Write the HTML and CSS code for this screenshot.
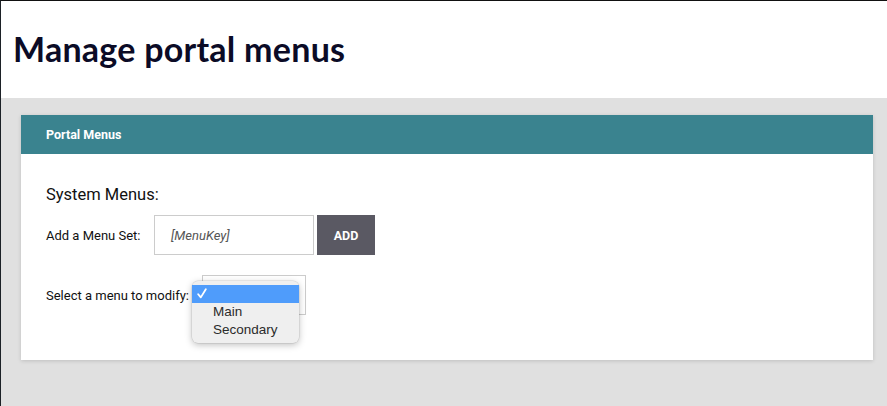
FILE: index.html
```html
<!DOCTYPE html>
<html>
<head>
<meta charset="utf-8">
<link rel="stylesheet" href="styles.css">
</head>
<body>
<div class="page">
  <header class="top">
    <h1 class="title">Manage portal menus</h1>
  </header>
  <main class="main">
    <section class="card">
      <div class="card-head">Portal Menus</div>
      <div class="card-body">
        <h2 class="section-title">System Menus:</h2>
        <div class="row">
          <label class="lbl">Add a Menu Set:</label>
          <div class="input">[MenuKey]</div>
          <button class="btn">ADD</button>
        </div>
        <div class="row row-select">
          <label class="lbl lbl-select">Select a menu to modify:</label>
          <div class="select-wrap">
            <div class="select"></div>
            <div class="popup">
              <div class="opt opt-active"><svg class="check" width="10" height="11" viewBox="0 0 10 11"><path d="M1.2 6.2 L3.8 9.4 L8.8 1.2" fill="none" stroke="#fff" stroke-width="1.8" stroke-linecap="round" stroke-linejoin="round"/></svg></div>
              <div class="opt">Main</div>
              <div class="opt">Secondary</div>
            </div>
          </div>
        </div>
      </div>
    </section>
  </main>
</div>
</body>
</html>
```

FILE: styles.css
```css
html, body {
  margin: 0;
  padding: 0;
  height: 100%;
}
body {
  font-family: Roboto, "Liberation Sans", sans-serif;
  background: #e0e0e0;
}
.page {
  height: 100%;
  box-sizing: border-box;
  border-top: 1px solid #111;
  border-left: 1px solid #1c2126;
  background: #e0e0e0;
}
.top {
  background: #fff;
  height: 97px;
  display: flex;
  align-items: center;
  padding-left: 12px;
}
.title {
  margin: 0;
  font-family: Lato, sans-serif;
  font-weight: 700;
  font-size: 34px;
  color: #0b0b26;
  letter-spacing: 0.25px;
  position: relative;
  top: -1px;
}
.main {
  padding: 17px 14px 0 20px;
}
.card {
  background: #fff;
  box-shadow: 0 1px 4px rgba(0,0,0,0.15);
  height: 245px;
}
.card-head {
  background: #3a838f;
  color: #fff;
  font-weight: 700;
  font-size: 12.5px;
  height: 39px;
  display: flex;
  align-items: center;
  padding-left: 25px;
}
.card-body {
  padding: 31px 25px 0 25px;
}
.section-title {
  margin: 0;
  font-weight: 400;
  font-size: 16.5px;
  color: #111;
  line-height: 20px;
}
.row {
  display: flex;
  align-items: center;
  margin-top: 10px;
}
.lbl {
  font-size: 13px;
  color: #111;
  width: 108px;
}
.input {
  box-sizing: border-box;
  width: 160px;
  height: 40px;
  border: 1px solid #cccccc;
  display: flex;
  align-items: center;
  padding-left: 16px;
  font-style: italic;
  font-size: 13px;
  color: #555;
}
.btn {
  margin-left: 3px;
  width: 58px;
  height: 40px;
  border: none;
  background: #5a5963;
  color: #fff;
  font-family: Roboto, sans-serif;
  font-weight: 700;
  font-size: 12.5px;
  padding: 0;
}
.row-select {
  margin-top: 20px;
}
.lbl-select {
  width: auto;
  margin-right: 13px;
}
.select-wrap {
  position: relative;
}
.select {
  box-sizing: border-box;
  width: 104px;
  height: 40px;
  border: 1px solid #cccccc;
  background: #fff;
}
.popup {
  position: absolute;
  left: -10px;
  top: 6px;
  width: 107px;
  height: 62px;
  box-sizing: border-box;
  padding-top: 4px;
  background: #efefef;
  border-radius: 6px;
  box-shadow: 0 2px 7px rgba(0,0,0,0.25), 0 0 0 0.5px rgba(0,0,0,0.12);
  font-family: "Liberation Sans", Arial, sans-serif;
  font-size: 13.5px;
  color: #2b2b2b;
}
.opt {
  height: 18px;
  line-height: 18px;
  padding-left: 21px;
  position: relative;
}
.opt-active {
  background: #4f9cfb;
}
.check {
  position: absolute;
  left: 5px;
  top: 3px;
}
```
